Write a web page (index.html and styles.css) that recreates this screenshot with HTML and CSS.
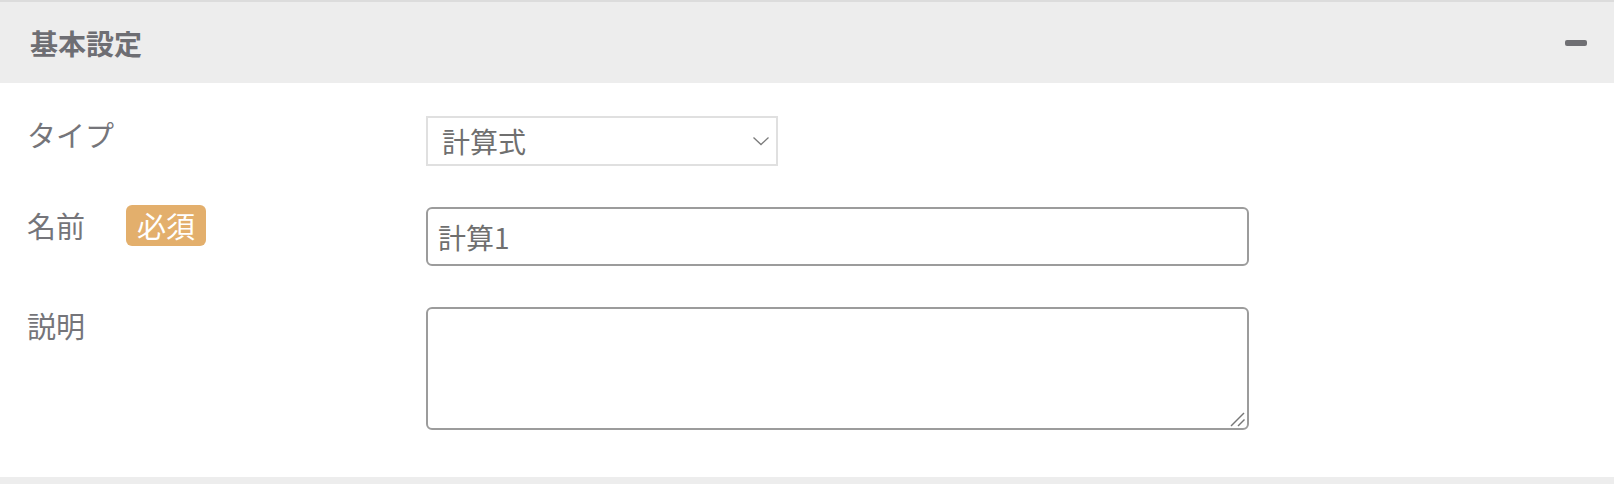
FILE: index.html
```html
<!DOCTYPE html>
<html lang="ja">
<head>
  <meta charset="UTF-8" />
  <title>基本設定</title>
  <link rel="stylesheet" href="styles.css">
</head>
<body>
  <section class="panel">
    <div class="panel-header">
      <h2 class="panel-title">基本設定</h2>
      <button class="collapse" type="button" aria-label="折りたたむ"><span></span></button>
    </div>

    <div class="panel-body">
      <div class="form-row">
        <div class="form-label">タイプ</div>
        <div class="form-field">
          <div class="select-wrap">
            <select id="type">
              <option>計算式</option>
              <option>数値</option>
              <option>テキスト</option>
            </select>
            <svg class="chevron" width="18" height="10" viewBox="0 0 18 10">
              <polyline points="1.5,1.5 9,8.5 16.5,1.5" fill="none" stroke="#7b7b7b" stroke-width="1.3" />
            </svg>
          </div>
        </div>
      </div>

      <div class="form-row">
        <div class="form-label">
          名前
          <span class="badge">必須</span>
        </div>
        <div class="form-field">
          <input type="text" class="text-input" value="計算1" />
        </div>
      </div>

      <div class="form-row">
        <div class="form-label">説明</div>
        <div class="form-field">
          <div class="area-wrap">
            <textarea class="text-area"></textarea>
            <svg class="grip" width="16" height="16" viewBox="0 0 16 16">
              <line x1="2" y1="15" x2="15" y2="2" stroke="#777" stroke-width="1.4" />
              <line x1="9" y1="15" x2="15.5" y2="8.5" stroke="#777" stroke-width="1.4" />
            </svg>
          </div>
        </div>
      </div>
    </div>
  </section>

  <div class="panel-next"></div>
</body>
</html>
```

FILE: styles.css
```css
body {
  margin: 0;
  background: #ffffff;
  font-family: "Noto Sans CJK JP", "Noto Sans", sans-serif;
  color: #737377;
}

.panel-header {
  display: flex;
  align-items: center;
  justify-content: space-between;
  height: 81px;
  padding: 0 27px 0 30px;
  background: #ededed;
  border-top: 2px solid #dcdcdc;
}

.panel-title {
  margin: 0;
  font-size: 28px;
  font-weight: bold;
  line-height: 36px;
  color: #6e6e73;
}

.collapse {
  display: flex;
  align-items: center;
  padding: 0;
  border: none;
  background: none;
  cursor: pointer;
}

.collapse span {
  display: block;
  width: 22px;
  height: 6px;
  border-radius: 2px;
  background: #6f6f73;
}

.panel-body {
  display: flex;
  flex-direction: column;
  gap: 41px;
  padding: 33px 0 47px 27px;
}

.form-row {
  display: grid;
  grid-template-columns: 399px 1fr;
  align-items: start;
}

.form-label {
  display: flex;
  align-items: center;
  gap: 41px;
  height: 36px;
  font-size: 29px;
  line-height: 36px;
  color: #75757a;
}

.badge {
  display: inline-block;
  height: 41px;
  padding: 0 11px;
  border-radius: 6px;
  background: #e3af6c;
  color: #ffffff;
  font-size: 29px;
  line-height: 41px;
}

.select-wrap {
  position: relative;
  width: 352px;
}

.select-wrap select {
  width: 100%;
  height: 50px;
  padding: 0 40px 0 14px;
  border: 2px solid #e0e0e0;
  border-radius: 0;
  background: #ffffff;
  font-family: inherit;
  font-size: 28px;
  color: #6f6f6f;
  appearance: none;
  box-sizing: border-box;
  outline: none;
}

.chevron {
  position: absolute;
  right: 8px;
  top: 20px;
  pointer-events: none;
}

.text-input,
.text-area {
  display: block;
  width: 823px;
  border: 2px solid #9c9c9c;
  border-radius: 6px;
  font-family: inherit;
  font-size: 28px;
  color: #6f6f6f;
  box-sizing: border-box;
  outline: none;
}

.text-input {
  height: 59px;
  padding: 0 10px;
}

.area-wrap {
  position: relative;
  width: 823px;
}

.text-area {
  height: 123px;
  padding: 8px 10px;
  resize: none;
}

.grip {
  position: absolute;
  right: 4px;
  bottom: 3px;
  pointer-events: none;
}

.panel-next {
  height: 7px;
  background: #ededed;
}
```
